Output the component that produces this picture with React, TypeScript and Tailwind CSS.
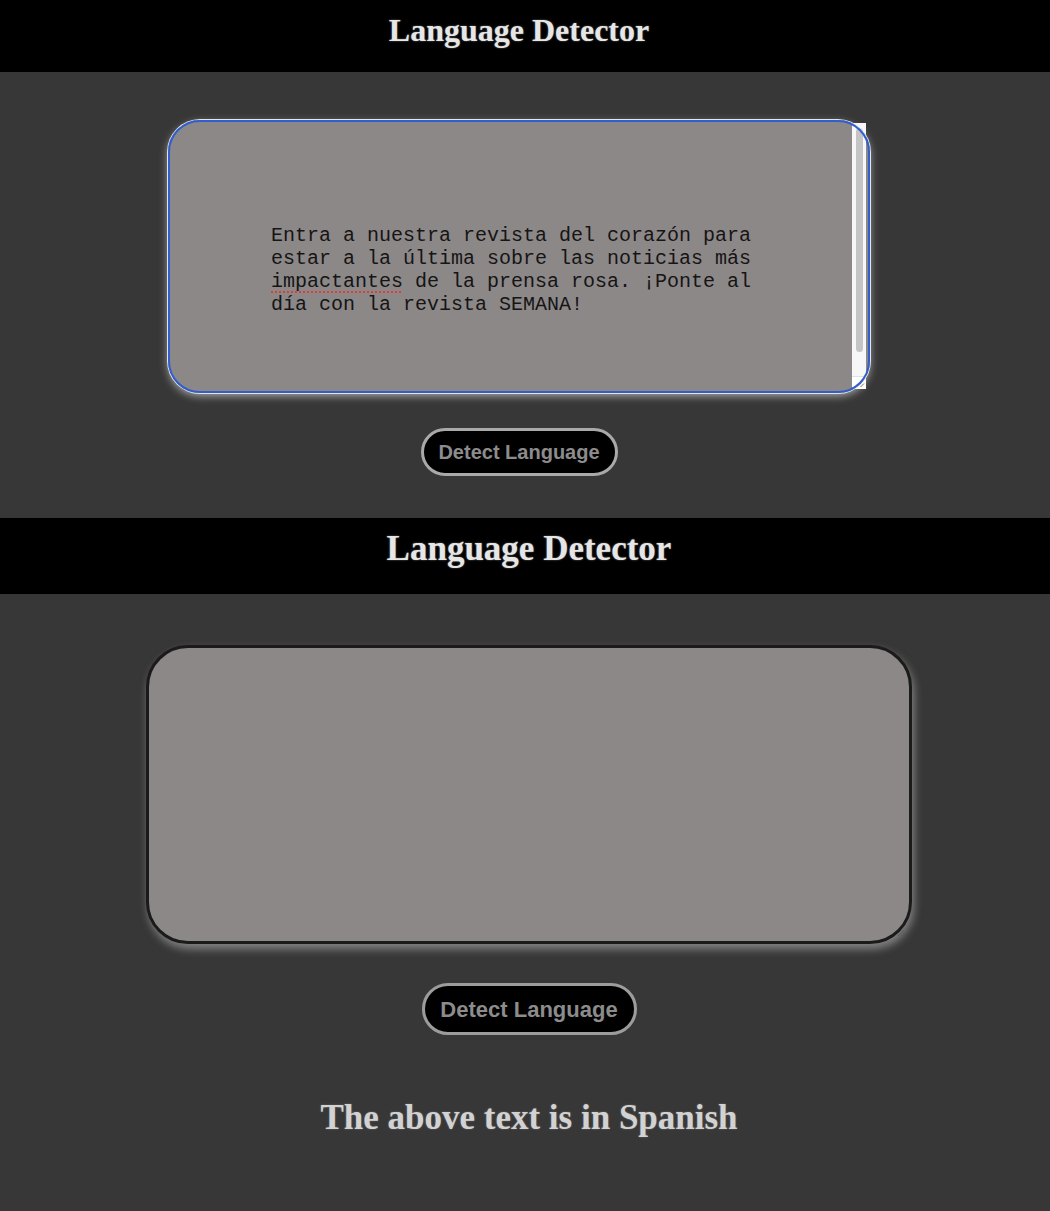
import React from "react";

const lines = [
  "Entra a nuestra revista del corazón para",
  "estar a la última sobre las noticias más",
  null,
  "día con la revista SEMANA!",
];

function Header({ big }: { big?: boolean }) {
  return (
    <div
      className={`flex justify-center bg-black ${big ? "h-[76px] pt-[13px] pl-[8px]" : "h-[72px] pt-[14px] pr-[12px]"}`}
    >
      <h1
        className={`font-['Liberation_Serif',serif] font-bold text-[#e6e6e6] leading-none [text-shadow:0_0_2px_rgba(160,160,160,0.7)] ${big ? "text-[35px]" : "text-[32px]"}`}
      >
        Language Detector
      </h1>
    </div>
  );
}

function DetectButton({ big }: { big?: boolean }) {
  return (
    <button
      className={`flex items-center justify-center rounded-full bg-black border-[3px] font-['Liberation_Sans',Arial,sans-serif] font-bold text-[#8c8c8c] ${
        big ? "w-[215px] h-[52px] text-[22px] border-[#9c9c9c]" : "w-[197px] h-[48px] text-[20px] border-[#a9a9a9]"
      }`}
    >
      Detect Language
    </button>
  );
}

export default function App() {
  return (
    <div className="w-[1050px] min-h-[1211px] bg-[#373737]">
      {/* first capture: text typed in */}
      <section className="h-[518px] bg-[#373737]">
        <Header />
        <div className="flex flex-col items-center pr-[12px] pt-[48px]">
          <div className="relative w-[702px] h-[273px] rounded-[32px] bg-[#8d8888] shadow-[0_3px_8px_rgba(210,210,210,0.75)]">
            <div className="pl-[103px] pt-[104px] font-['Liberation_Mono',monospace] text-[20px] leading-[23px] text-[#151515] whitespace-pre">
              {lines.map((l, i) =>
                l === null ? (
                  <div key={i}>
                    <span className="underline decoration-dotted decoration-[#e03a3a] decoration-2 underline-offset-[4px]">impactantes</span>
                    {" de la prensa rosa. ¡Ponte al"}
                  </div>
                ) : (
                  <div key={i}>{l}</div>
                )
              )}
            </div>
            {/* scrollbar */}
            <div className="absolute top-[3px] right-[4px] w-[14px] h-[266px] bg-[#f7f7f7] flex flex-col items-center pt-[5px]">
              <div className="w-[7px] h-[224px] rounded-full bg-[#c4c4c4]" />
              <div className="mt-auto w-[14px] h-[13px] border-t border-[#e2e2e2] bg-white relative">
                <svg className="absolute right-[1px] bottom-[1px]" width="9" height="9" viewBox="0 0 9 9">
                  <path d="M8 1 L1 8 M8 4.5 L4.5 8" stroke="#7a7a7a" strokeWidth="1" />
                </svg>
              </div>
            </div>
            {/* focus border drawn over the scrollbar */}
            <div className="absolute inset-0 rounded-[32px] border-2 border-[#2f5fcf] shadow-[0_0_0_1px_#e4e4e4] pointer-events-none" />
          </div>
          <div className="mt-[35px]">
            <DetectButton />
          </div>
        </div>
      </section>

      {/* second capture: result shown */}
      <section className="bg-[#373737] pb-[60px]">
        <Header big />
        <div className="flex flex-col items-center pl-[8px] pt-[51px]">
          <div className="relative w-[766px] h-[299px] rounded-[42px] border-[3px] border-[#1b1b1b] bg-[#8d8888] shadow-[2px_5px_8px_rgba(150,150,150,0.8)]">
            <svg className="absolute right-[4px] bottom-[4px]" width="8" height="8" viewBox="0 0 8 8">
              <path d="M7 1 L1 7 M7 4 L4 7" stroke="#5a5a5a" strokeWidth="1" />
            </svg>
          </div>
          <div className="mt-[39px]">
            <DetectButton big />
          </div>
          <p className="mt-[63px] font-['Liberation_Serif',serif] font-bold text-[35px] leading-[40px] text-[#d2d2d2] [text-shadow:0_0_2px_rgba(150,150,150,0.6)]">
            The above text is in Spanish
          </p>
        </div>
      </section>
    </div>
  );
}
